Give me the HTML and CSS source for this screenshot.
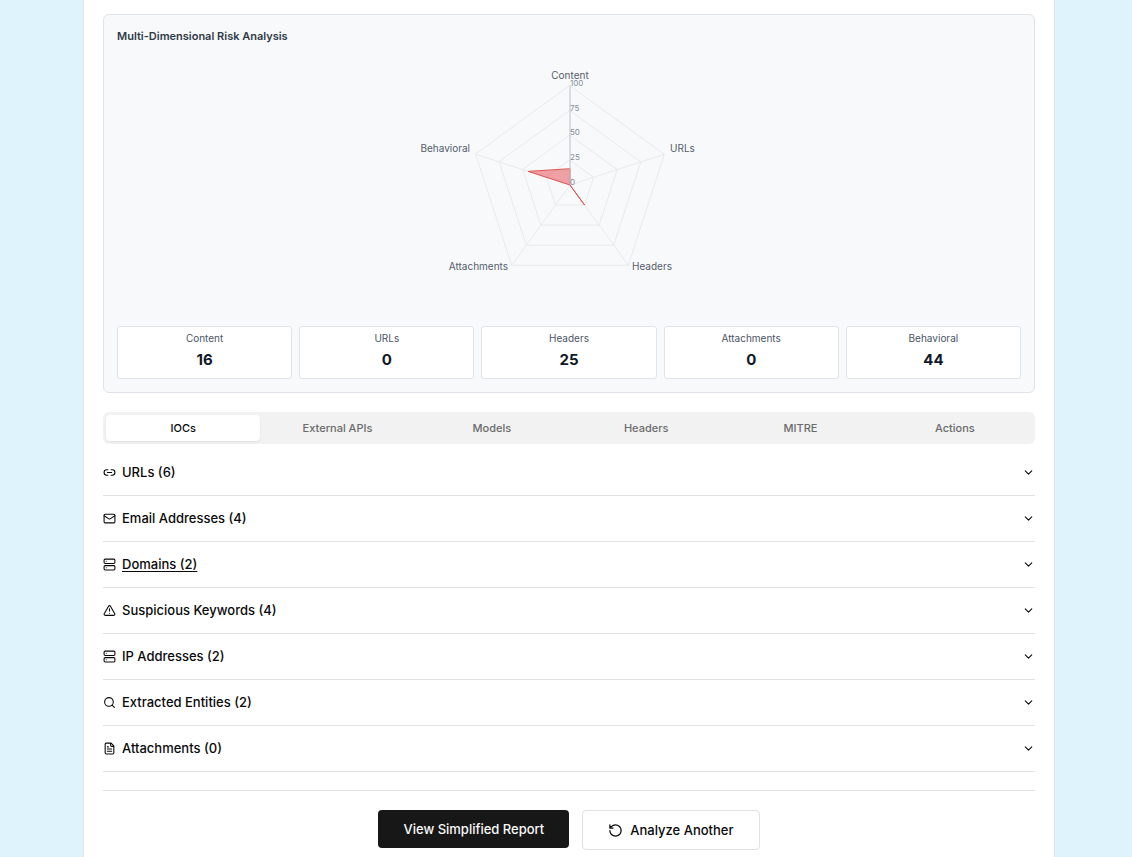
FILE: index.html
```html
<!DOCTYPE html>
<html lang="en">
<head>
<meta charset="utf-8">
<meta name="viewport" content="width=device-width, initial-scale=1">
<title>Email Risk Report</title>
<link rel="stylesheet" href="styles.css">
</head>
<body>
<svg class="sprite" aria-hidden="true">
  <symbol id="link" viewBox="0 0 24 24"><path d="M9 17H7A5 5 0 0 1 7 7h2M15 7h2a5 5 0 1 1 0 10h-2M8 12h8"/></symbol>
  <symbol id="mail" viewBox="0 0 24 24"><rect width="20" height="16" x="2" y="4" rx="2"/><path d="m22 7-8.97 5.700a1.940 1.940 0 0 1-2.060 0L2 7"/></symbol>
  <symbol id="server" viewBox="0 0 24 24"><rect width="20" height="8" x="2" y="2" rx="2"/><rect width="20" height="8" x="2" y="14" rx="2"/><path d="M6 6h.01M6 18h.01"/></symbol>
  <symbol id="alert" viewBox="0 0 24 24"><path d="m21.730 18-8-14a2 2 0 0 0-3.480 0l-8 14A2 2 0 0 0 4 21h16a2 2 0 0 0 1.730-3M12 9v4M12 17h.01"/></symbol>
  <symbol id="search" viewBox="0 0 24 24"><circle cx="11" cy="11" r="8"/><path d="m21 21-4.300-4.300"/></symbol>
  <symbol id="file" viewBox="0 0 24 24"><path d="M15 2H6a2 2 0 0 0-2 2v16a2 2 0 0 0 2 2h12a2 2 0 0 0 2-2V7ZM14 2v4a2 2 0 0 0 2 2h4M10 9H8M16 13H8M16 17H8"/></symbol>
  <symbol id="chevron" viewBox="0 0 24 24"><path d="m6 9 6 6 6-6"/></symbol>
  <symbol id="reset" viewBox="0 0 24 24"><path d="M3 12a9 9 0 1 0 9-9 9.750 9.750 0 0 0-6.740 2.740L3 8M3 3v5h5"/></symbol>
</svg>
<main class="report">
  <section class="panel">
    <h2 class="panel-title">Multi-Dimensional Risk Analysis</h2>
    <svg class="radar" viewBox="0 0 299 248" role="img" aria-label="Risk scores by dimension">
      <g class="radar-grid">
        <path d="M150 124V24.800M150 124L244.300 93.300M150 124L208.300 204.300M150 124L91.700 204.300M150 124L55.700 93.300"/>
        <path d="M150 99.200L173.600 116.300L164.600 144.100H135.400L126.400 116.300Z"/>
        <path d="M150 74.400L197.200 108.700L179.200 164.100H120.800L102.800 108.700Z"/>
        <path d="M150 49.600L220.800 101L193.700 184.200H106.300L79.200 101Z"/>
        <path d="M150 24.800L244.300 93.300L208.300 204.300H91.700L55.700 93.300Z"/>
      </g>
      <path class="radar-area" d="M150 108.100L150 124L164.600 144.100L150 124L108.500 110.500Z"/>
      <path class="radar-axis" d="M150 124V24.800"/>
      <g class="radar-tick">
        <text x="150" y="124">0</text>
        <text x="150" y="99">25</text>
        <text x="150" y="74">50</text>
        <text x="150" y="50">75</text>
        <text x="150" y="25">100</text>
      </g>
      <g class="radar-label">
        <text x="150" y="18" text-anchor="middle">Content</text>
        <text x="250" y="91">URLs</text>
        <text x="212" y="209">Headers</text>
        <text x="88" y="209" text-anchor="end">Attachments</text>
        <text x="50" y="91" text-anchor="end">Behavioral</text>
      </g>
    </svg>
    <dl class="scores">
      <div class="score"><dt>Content</dt><dd>16</dd></div>
      <div class="score"><dt>URLs</dt><dd>0</dd></div>
      <div class="score"><dt>Headers</dt><dd>25</dd></div>
      <div class="score"><dt>Attachments</dt><dd>0</dd></div>
      <div class="score"><dt>Behavioral</dt><dd>44</dd></div>
    </dl>
  </section>

  <div class="tabs" role="tablist">
    <button class="tab active" role="tab" aria-selected="true">IOCs</button>
    <button class="tab" role="tab" aria-selected="false">External APIs</button>
    <button class="tab" role="tab" aria-selected="false">Models</button>
    <button class="tab" role="tab" aria-selected="false">Headers</button>
    <button class="tab" role="tab" aria-selected="false">MITRE</button>
    <button class="tab" role="tab" aria-selected="false">Actions</button>
  </div>

  <div class="accordion">
    <button class="row" aria-expanded="false"><svg class="icon"><use href="#link"/></svg><span class="row-name">URLs (6)</span><svg class="chevron"><use href="#chevron"/></svg></button>
    <button class="row" aria-expanded="false"><svg class="icon"><use href="#mail"/></svg><span class="row-name">Email Addresses (4)</span><svg class="chevron"><use href="#chevron"/></svg></button>
    <button class="row underlined" aria-expanded="false"><svg class="icon"><use href="#server"/></svg><span class="row-name">Domains (2)</span><svg class="chevron"><use href="#chevron"/></svg></button>
    <button class="row" aria-expanded="false"><svg class="icon"><use href="#alert"/></svg><span class="row-name">Suspicious Keywords (4)</span><svg class="chevron"><use href="#chevron"/></svg></button>
    <button class="row" aria-expanded="false"><svg class="icon"><use href="#server"/></svg><span class="row-name">IP Addresses (2)</span><svg class="chevron"><use href="#chevron"/></svg></button>
    <button class="row" aria-expanded="false"><svg class="icon"><use href="#search"/></svg><span class="row-name">Extracted Entities (2)</span><svg class="chevron"><use href="#chevron"/></svg></button>
    <button class="row" aria-expanded="false"><svg class="icon"><use href="#file"/></svg><span class="row-name">Attachments (0)</span><svg class="chevron"><use href="#chevron"/></svg></button>
  </div>

  <footer class="actions">
    <button class="btn primary">View Simplified Report</button>
    <button class="btn outline"><svg class="btn-icon"><use href="#reset"/></svg>Analyze Another</button>
  </footer>
</main>
</body>
</html>
```

FILE: styles.css
```css
* {
  box-sizing: border-box;
}

body {
  margin: 0;
  padding: 0 77px 0 83px;
  background: #def3fc;
  color: #0a0a0a;
  font-family: Inter, "Liberation Sans", sans-serif;
  font-size: 13px;
}

button {
  margin: 0;
  border: 0;
  background: none;
  color: inherit;
  font: inherit;
  font-weight: 500;
  cursor: pointer;
}

svg {
  fill: none;
  stroke: currentColor;
  stroke-width: 2;
  stroke-linecap: round;
  stroke-linejoin: round;
}

.sprite {
  display: none;
}

.report {
  min-height: 100vh;
  padding: 14px 19px 7px;
  border: 1px solid #dfe3e8;
  border-width: 0 1px;
  background: #fff;
}

.panel {
  padding: 13px;
  border: 1px solid #e0e3e9;
  border-radius: 6px;
  background: #f8f9fb;
}

.panel-title {
  margin: 0 0 17px;
  color: #2f3947;
  font-size: 11px;
  font-weight: 600;
  line-height: 16px;
}

.radar {
  display: block;
  height: 248px;
  margin: 0 auto 17px;
  stroke-width: 1;
}

.radar-grid {
  stroke: #e9eaec;
}

.radar-area {
  fill: #e5484d;
  fill-opacity: 0.5;
  stroke: #e0524f;
}

.radar-axis {
  stroke: #c6c8cc;
}

.radar text {
  stroke: none;
}

.radar-tick {
  fill: #858c98;
  font-size: 8px;
}

.radar-label {
  fill: #555d6b;
  font-size: 10px;
}

.scores {
  display: grid;
  grid-template-columns: repeat(5, 1fr);
  gap: 7px;
  margin: 0;
}

.score {
  padding: 4px 6px 7px;
  border: 1px solid #e0e3e9;
  border-radius: 3px;
  background: #fff;
  text-align: center;
}

.score dt {
  color: #4b5563;
  font-size: 10px;
  line-height: 14px;
}

.score dd {
  margin: 4px 0 0;
  color: #111827;
  font-size: 15px;
  font-weight: 700;
  line-height: 22px;
}

.tabs {
  display: grid;
  grid-template-columns: repeat(6, 1fr);
  margin-top: 19px;
  padding: 3px;
  border-radius: 6px;
  background: #f2f2f2;
}

.tab {
  padding: 5px 10px;
  border-radius: 4px;
  color: #6b6b6b;
  font-size: 11px;
  line-height: 16px;
}

.tab.active {
  background: #fff;
  color: #0a0a0a;
  box-shadow: 0 1px 2px rgba(0, 0, 0, 0.08);
}

.accordion {
  margin-top: 6px;
}

.row {
  display: flex;
  align-items: center;
  gap: 6px;
  width: 100%;
  padding: 12px 0 13px;
  border-bottom: 1px solid #e1e1e1;
  line-height: 20px;
  text-align: left;
}

.row-name {
  flex: 1;
}

.underlined .row-name {
  text-decoration: underline;
  text-underline-offset: 2px;
}

.icon,
.chevron {
  width: 13px;
  height: 13px;
}

.actions {
  display: flex;
  flex-wrap: wrap;
  align-items: flex-start;
  justify-content: center;
  gap: 13px;
  margin-top: 18px;
  padding-top: 19px;
  border-top: 1px solid #e1e1e1;
}

.btn {
  display: flex;
  align-items: center;
  gap: 7px;
  padding: 9px 25px;
  border-radius: 4px;
  line-height: 20px;
}

.primary {
  background: #171717;
  color: #fafafa;
}

.outline {
  border: 1px solid #e1e1e1;
  background: #fff;
}

.btn-icon {
  width: 15px;
  height: 15px;
}
```
